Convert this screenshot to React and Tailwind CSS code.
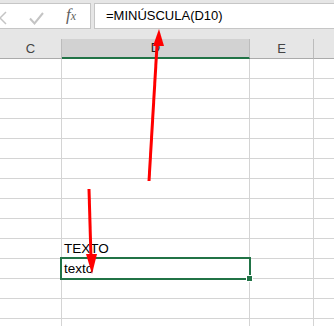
import React from "react";

const ROWS = 14;

const Cell = ({ w, children, last }) => (
  <div
    className={
      "h-full shrink-0 border-b border-[#d4d4d4] flex items-end pl-[3px] " +
      (last ? "flex-1" : "border-r")
    }
    style={w ? { width: w } : undefined}
  >
    {children}
  </div>
);

const App = () => {
  return (
    <div className="relative w-[334px] h-[326px] overflow-hidden bg-white font-['Liberation_Sans',Arial,sans-serif] text-black">
      {/* formula bar */}
      <div className="bg-[#e6e6e6] h-[39px] pt-[3px] flex gap-[3px]">
        <div className="relative w-[91px] h-[26px] bg-white border border-l-0 border-[#c6c6c6]">
          <svg className="absolute left-0 top-0" width="91" height="24" viewBox="0 0 91 24">
            <path d="M-6 8 L6 20 M6 8 L-6 20" stroke="#c4c4c4" strokeWidth="1.5" fill="none" />
            <path d="M30 14.5 L34.5 19.5 L43 9" stroke="#c4c4c4" strokeWidth="2" fill="none" />
          </svg>
          <span className="absolute left-[66px] top-[1px] font-['Liberation_Serif',serif] italic text-[17px] text-[#5f5f5f] leading-[20px]">
            f<span className="text-[12px]">x</span>
          </span>
        </div>
        <div className="flex-1 h-[26px] bg-white border border-r-0 border-[#c6c6c6] flex items-center pl-[11px] text-[13px]">
          =MINÚSCULA(D10)
        </div>
      </div>

      {/* column headers */}
      <div className="flex h-[20px] bg-[#e6e6e6] text-[13px] text-[#444]">
        <div className="w-[62px] shrink-0 border-r border-b border-r-[#bcbcbc] border-b-[#ababab] flex items-center justify-center">
          C
        </div>
        <div className="w-[188px] shrink-0 bg-[#d2d2d2] border-r border-r-[#bcbcbc] border-b-2 border-b-[#217346] flex items-center justify-center text-[#222]">
          D
        </div>
        <div className="w-[64px] shrink-0 border-r border-b border-r-[#bcbcbc] border-b-[#ababab] flex items-center justify-center">
          E
        </div>
        <div className="flex-1 border-b border-b-[#ababab]" />
      </div>

      {/* grid */}
      <div className="flex flex-col text-[13.5px] leading-[16px]">
        {Array.from({ length: ROWS }).map((_, i) => (
          <div key={i} className="flex h-[20px]">
            <Cell w={62} />
            <div className="relative w-[188px] h-full shrink-0 border-r border-b border-[#d4d4d4] flex items-end pl-[2px] pb-[1px]">
              {i === 9 && "TEXTO"}
              {i === 10 && (
                <>
                  texto
                  <div className="absolute z-10 -left-[2px] -top-[2px] w-[191px] h-[23px] border-2 border-[#217346]">
                    <div className="absolute left-[184px] top-[16px] w-[7px] h-[7px] bg-[#217346] border border-white" />
                  </div>
                </>
              )}
            </div>
            <Cell w={64} />
            <Cell last />
          </div>
        ))}
      </div>

      {/* arrows */}
      <svg className="absolute inset-0 z-20 pointer-events-none" width="334" height="326" viewBox="0 0 334 326">
        <line x1="149" y1="181" x2="157.2" y2="42" stroke="#ff0000" strokeWidth="3" />
        <polygon points="159,29 153,46 164,46" fill="#ff0000" />
        <line x1="89" y1="189" x2="91" y2="258" stroke="#ff0000" strokeWidth="3" />
        <polygon points="92,274 86,254 97,254" fill="#ff0000" />
      </svg>
    </div>
  );
};

export default App;
